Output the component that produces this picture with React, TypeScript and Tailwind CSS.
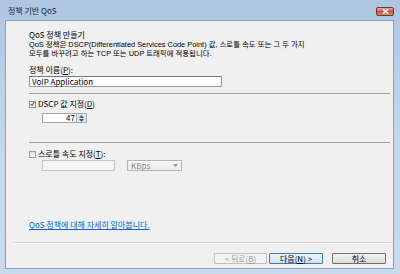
export default function App() {
  const font = "font-['Noto_Sans_CJK_KR','Noto_Sans',sans-serif]";
  const para = "font-['Liberation_Sans','Noto_Sans_CJK_KR',sans-serif] whitespace-nowrap text-[7.4px] leading-[9px]";
  return (
    <div
      className={`w-[400px] h-[274px] flex flex-col overflow-hidden bg-gradient-to-b from-[#aec6e2] via-[#c3d6ec] to-[#c8daee] ${font} text-[8px] leading-[8px] text-black`}
    >
      {/* Title bar */}
      <div className="h-[20px] flex items-start justify-between pl-[8px] pr-[6px] pt-[7px] shrink-0">
        <span className="text-[8px] leading-[8px] text-[#1b2636]">정책 기반 QoS</span>
        <div className="w-[18px] h-[9px] rounded-[2px] border border-[#70342c] bg-gradient-to-b from-[#e6aca2] via-[#c8553f] to-[#d88c76] flex items-center justify-center">
          <svg width="7" height="5" viewBox="0 0 7 5">
            <path d="M1 0.5 L6 4.5 M6 0.5 L1 4.5" stroke="#ffffff" strokeWidth="1.6" />
          </svg>
        </div>
      </div>

      {/* Client area */}
      <div className="flex-1 ml-[5px] mr-[6px] mb-[5px] border border-[#8aa0bb] bg-[#f0f0f0] flex flex-col">
        <div className="flex flex-col pl-[23px] pr-[3px] pt-[10px]">
          <div className="whitespace-nowrap">QoS 정책 만들기</div>
          <div className={`mt-[1px] ${para}`}>
            QoS 정책은 DSCP(Differentiated Services Code Point) 값, 스로틀 속도 또는 그 두 가지
          </div>
          <div className={para}>모두를 바꾸려고 하는 TCP 또는 UDP 트래픽에 적용됩니다.</div>

          <div className="mt-[8px] whitespace-nowrap">
            정책 이름(<span className="underline">P</span>):
          </div>
          <div className="mt-[2px] w-[193px] h-[11px] border border-[#8e9aa8] border-t-[#6f7b8b] bg-white flex items-center pl-[2px] whitespace-nowrap">
            VoIP Application
          </div>

          <div className="mt-[6px] h-px bg-[#a0a0a0]" />

          <div className="mt-[6px] flex items-center gap-[2px] h-[8px]">
            <div className="w-[7px] h-[7px] border border-[#8f8f8f] bg-gradient-to-b from-[#e8e8e8] to-[#f8f8f8] flex items-center justify-center">
              <svg width="6" height="6" viewBox="0 0 6 6">
                <path d="M0.8 3 L2.4 4.8 L5.3 0.8" stroke="#3c5a83" strokeWidth="1.3" fill="none" />
              </svg>
            </div>
            <span className="whitespace-nowrap">
              DSCP 값 지정(<span className="underline">D</span>)
            </span>
          </div>
          <div className="mt-[5px] ml-[13px] flex h-[10px]">
            <div className="w-[34px] h-[10px] border border-[#a0a8b2] border-r-0 bg-white flex items-center justify-end pr-[1px]">
              47
            </div>
            <div className="w-[11px] h-[10px] border border-[#a0a8b2] bg-[#dfe6ee] flex flex-col items-center justify-center gap-[1px]">
              <svg width="5" height="3" viewBox="0 0 5 3">
                <path d="M0 3 L2.5 0 L5 3 Z" fill="#3b5b86" />
              </svg>
              <svg width="5" height="3" viewBox="0 0 5 3">
                <path d="M0 0 L2.5 3 L5 0 Z" fill="#3b5b86" />
              </svg>
            </div>
          </div>

          <div className="mt-[19px] h-px bg-[#a0a0a0]" />

          <div className="mt-[7px] flex items-center gap-[2px] h-[8px]">
            <div className="w-[7px] h-[7px] border border-[#9a9a9a] bg-gradient-to-b from-[#e4e4e4] to-[#f6f6f6]" />
            <span className="whitespace-nowrap">
              스로틀 속도 지정(<span className="underline">T</span>):
            </span>
          </div>
          <div className="mt-[2px] ml-[13px] flex gap-[12px]">
            <div className="w-[73px] h-[11px] border border-[#c4c4c4] bg-[#f4f4f4]" />
            <div className="w-[55px] h-[11px] border border-[#b4b4b4] bg-gradient-to-b from-[#f6f6f6] to-[#ececec] flex items-center justify-between pl-[3px] pr-[3px] text-[#8a8a8a]">
              <span>KBps</span>
              <svg width="5" height="3" viewBox="0 0 5 3">
                <path d="M0 0 L2.5 3 L5 0 Z" fill="#9a9a9a" />
              </svg>
            </div>
          </div>

          <div className="mt-[50px] whitespace-nowrap">
            <span className="text-[#0066cc] underline">QoS 정책에 대해 자세히 알아봅니다.</span>
          </div>
        </div>

        <div className="mt-[13px] ml-[7px] h-px bg-[#dadada]" />
        <div className="ml-[7px] h-px bg-white" />

        <div className="flex justify-end pr-[7px] pt-[9px] gap-[2px]">
          <div className="w-[53px] h-[11px] border border-[#c0c0c0] bg-[#f4f4f4] text-[#9a9a9a] flex items-center justify-center rounded-[1px] whitespace-nowrap">
            &lt; 뒤로(<span className="underline">B</span>)
          </div>
          <div className="w-[54px] h-[11px] border border-[#3c7fb1] bg-gradient-to-b from-[#eaf3fb] to-[#cfe3f4] flex items-center justify-center rounded-[1px] whitespace-nowrap">
            다음(<span className="underline">N</span>) &gt;
          </div>
          <div className="ml-[7px] w-[54px] h-[11px] border border-[#707070] bg-gradient-to-b from-[#f2f2f2] to-[#dcdcdc] flex items-center justify-center rounded-[1px] whitespace-nowrap">
            취소
          </div>
        </div>
      </div>
    </div>
  );
}
